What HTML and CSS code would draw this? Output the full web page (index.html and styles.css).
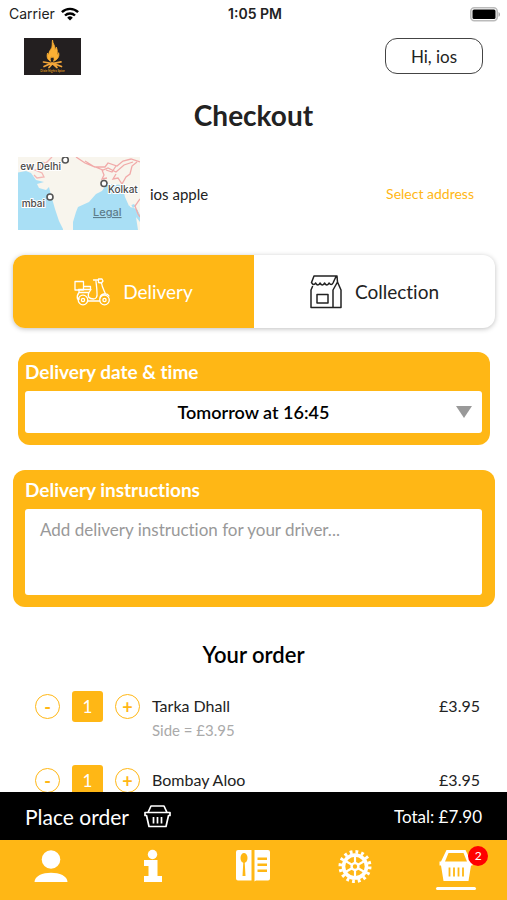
FILE: index.html
```html
<!DOCTYPE html>
<html lang="en">
<head>
<meta charset="utf-8">
<meta name="viewport" content="width=device-width, initial-scale=1">
<title>Checkout</title>
<link rel="stylesheet" href="styles.css">
</head>
<body>
<div class="status">
  <div class="carrier">Carrier
    <svg width="18" height="14" viewBox="0 0 18 14" fill="none" stroke="#000" stroke-width="2.4" aria-hidden="true"><path d="M.9 5.2a11.5 11.5 0 0 1 16.2 0M4 8.5a7.2 7.2 0 0 1 10 0"/><path d="M9 13.4 6.2 10.7a4 4 0 0 1 5.6 0z" fill="#000" stroke="none"/></svg>
  </div>
  <div class="clock">1:05 PM</div>
  <svg class="battery" width="31" height="15" viewBox="0 0 31 15" aria-hidden="true"><rect x=".8" y=".8" width="26.400" height="13" rx="3.500" fill="#fff" stroke="#bbb" stroke-width="1.600"/><rect x="2.500" y="2.500" width="23" height="9.600" rx="1.500"/><path d="M28.500 5c2 .8 2 4 0 4.800z" fill="#aaa"/></svg>
</div>

<main class="content">
  <header class="top">
    <svg class="logo" width="57" height="37" viewBox="0 0 57 37" role="img" aria-label="Restaurant logo">
      <rect width="57" height="37" fill="#231f20"/>
      <path d="M28.500 2c.2 4 3 5.500 2.300 9.500 1-.6 1.400-1.600 1.500-2.500 1.600 4 .8 5.500 1 7.500 1 0 1.300-1 1.300-1.800 1.300 4-1.600 7.300-5.100 8.600 1.300-2.300.4-3.600-.5-4.500-.8 1.300-1.700 1.300-1.800-.2-1.500 2-1.100 3.400-.3 4.700-3.500-1.200-4.500-4.800-3.300-8.300.3 1 .8 1.400 1.300 1.400-.3-4 3.600-5.400 3.300-9.400-.1-2 .1-3.500.3-5z" fill="#fbb034" stroke="#fbb034" stroke-width=".8"/>
      <path d="m19.500 24 9 1.500 8.500-1.700M20 28.500l8-3.500 9.500 3.500M25 29.500l3.500-4 4.500 4" fill="none" stroke="#f4a63a" stroke-width="1.700" stroke-linecap="round"/>
      <text x="28.500" y="34" text-anchor="middle" class="logo-text">Dixie Nights Spice</text>
    </svg>
    <button class="greeting" type="button">Hi, ios</button>
  </header>

  <h1>Checkout</h1>

  <section class="address">
    <svg class="map" width="122" height="73" viewBox="0 0 122 73" role="img" aria-label="Map of India">
      <rect width="122" height="73" fill="#f8f5ed"/>
      <path d="M0 15.500 8 14l5 2 5 7 8 2-7 2 2 4 7 2 3-3 2 8 4 14 4 12 4 8v5H0z" fill="#a9dff5"/>
      <path d="M55 73v-8l3-10 2-5 11-5 7-8 6-3 4-6 4-1 12 1 3 12 4 9 5-2 3 4 3 7v15z" fill="#a9dff5"/>
      <path d="m111 44 4 7 4-3 3 3v6l-3-5-7-2zM118 60l4 5v8h-2z" fill="#f8f5ed"/>
      <path d="M34 0 28 6l-5-1-1 6-5 2 7 3 2 4-7 1-3-3" fill="none" stroke="#f4b7b5" stroke-width="1.300"/>
      <path d="m58 0 9 6 10 4h10l3-4 9 3 6-5 8-2 9 3M67 4l8 5 10 4 5-2 8 4 8-7 9-3M84 13l2 5-2 4 5-1M98 17l-3 5 5-1 4 6 4-7 4-3 2-8 5-4M98 9l-4 6-6-2M122 42l-5 7 3 8 2 3" fill="none" stroke="#f1aaa9" stroke-width="1.300"/>
      <g fill="#fff" stroke="#555" stroke-width="1.600"><circle cx="47.300" cy="3" r="3"/><circle cx="86" cy="26.500" r="3"/><circle cx="32" cy="40" r="3"/></g>
      <g class="map-text"><text x="43" y="13" text-anchor="end">ew Delhi</text><text x="90" y="36">Kolkat</text><text x="27" y="50" text-anchor="end">mbai</text></g>
      <text x="75" y="59" class="map-legal">Legal</text>
    </svg>
    <span class="address-name">ios apple</span>
    <a class="select-address" href="#address">Select address</a>
  </section>

  <div class="tabs">
    <button class="tab tab-active" type="button" aria-pressed="true">
      <svg width="36" height="28" viewBox="0 0 36 28" fill="none" stroke="currentColor" stroke-width="1.300" stroke-linejoin="round" stroke-linecap="round" aria-hidden="true"><path d="M1 3.500h8.500v8.500H1zM9.500 8.500h7v3H4.500M5 12v2.500h10l2-3M5 14.500c-1.500 2-2.300 4-1.500 6.500h1.800M15 14.500c-2 4 0 6.500 4.500 6.500 2.500 0 4-2 3.500-6 0-4-.5-7-1-11.500M19.500 2h5M24.500 1h3.500l1 2-1.500 2-3-.5zM27.500 5c.5 4 2.300 7 4 11M26 20c.5-4.500 7-5.500 9-2"/><circle cx="9" cy="22" r="4.800"/><circle cx="9" cy="22" r="1.600"/><circle cx="30.500" cy="22" r="4.800"/><circle cx="30.500" cy="22" r="1.600"/><path d="M13.800 23h12"/></svg>
      Delivery
    </button>
    <button class="tab" type="button" aria-pressed="false">
      <svg width="32" height="34" viewBox="0 0 32 34" fill="none" stroke="currentColor" stroke-width="1.500" stroke-linejoin="round" stroke-linecap="round" aria-hidden="true"><path d="M4 1h23M4 1 1.500 7.500c1.500 2.500 3 2.500 4 .5 1.500 2.500 3.500 2.500 4.500 0 1.500 2.500 3.500 2.500 4.500 0 1.500 2.500 3.500 2.500 4.500 0 1.500 2 3 2 4 0L26 1.500M4 1h23l.5 6 3.500 8v17.500H1V15l1.500-3.500M27.500 7 23 15v17.500"/><path d="M7 19.500h11v8.500H7z"/></svg>
      Collection
    </button>
  </div>

  <section class="panel panel-time">
    <label for="time">Delivery date &amp; time</label>
    <div class="select-wrap">
      <select id="time"><option>Tomorrow at 16:45</option></select>
      <svg class="arrow" width="16" height="12" viewBox="0 0 16 12" aria-hidden="true"><path d="M0 0h16L8 12z" fill="#999"/></svg>
    </div>
  </section>

  <section class="panel panel-notes">
    <label for="notes">Delivery instructions</label>
    <textarea id="notes" placeholder="Add delivery instruction for your driver..."></textarea>
  </section>

  <h2>Your order</h2>
  <ul class="items">
    <li class="item">
      <div class="stepper"><button class="step" type="button" aria-label="Remove one Tarka Dhall">-</button><span class="qty">1</span><button class="step" type="button" aria-label="Add one Tarka Dhall">+</button></div>
      <div class="item-text"><div class="item-name">Tarka Dhall</div><div class="item-note">Side = £3.95</div></div>
      <div class="price">£3.95</div>
    </li>
    <li class="item">
      <div class="stepper"><button class="step" type="button" aria-label="Remove one Bombay Aloo">-</button><span class="qty">1</span><button class="step" type="button" aria-label="Add one Bombay Aloo">+</button></div>
      <div class="item-text"><div class="item-name">Bombay Aloo</div></div>
      <div class="price">£3.95</div>
    </li>
  </ul>
</main>

<div class="order-bar">
  <button class="place" type="button">Place order
    <svg width="27" height="23" viewBox="0 0 27 23" fill="none" stroke="#fff" stroke-width="1.700" stroke-linejoin="round" aria-hidden="true"><path d="M1 7.500h25v3h-1.500L22 21.500H5L2.500 10.500H1zM4 7.500 7 1h13l3 6.500M9.500 12v6.500M13.500 12v6.500M17.500 12v6.500"/></svg>
  </button>
  <div class="total">Total: £7.90</div>
</div>

<nav class="nav">
  <a href="#account" aria-label="Account"><svg width="34" height="34" viewBox="0 0 34 34" fill="#fff"><circle cx="17" cy="10.500" r="9.300"/><path d="M.5 33c0-12.500 33-12.500 33 0z"/></svg></a>
  <a href="#info" aria-label="Information"><svg width="34" height="34" viewBox="0 0 34 34" fill="#fff"><circle cx="17.500" cy="5.500" r="4.700"/><path d="M9 11h13.500v16H27v6H9v-6h4.500V17H9z"/></svg></a>
  <a href="#menu" aria-label="Menu"><svg width="34" height="34" viewBox="0 0 34 34" fill="#fff"><path d="M2 1h13.500v30.500H2a2 2 0 0 1-2-2V3a2 2 0 0 1 2-2zM18.500 1H32a2 2 0 0 1 2 2v26.500a2 2 0 0 1-2 2H20l-1.500 1z"/><g fill="#ffb715"><ellipse cx="8" cy="9" rx="3.500" ry="5"/><path d="M7.300 13h1.400l.8 14h-3zM21.500 8.500H31v2.500h-9.500zM21.500 14.500H31V17h-9.500zM21.500 20.500H31V23h-9.500z"/></g></svg></a>
  <a href="#settings" aria-label="Settings"><svg width="34" height="34" viewBox="0 0 34 34" fill="none" stroke="#fff"><circle cx="17" cy="17.500" r="11.500" stroke-width="3.600"/><circle cx="17" cy="17.500" r="14.700" stroke-width="3.600" stroke-dasharray="2.800 2.973"/><circle cx="17" cy="17.500" r="3.400" stroke-width="2.400"/><path stroke-width="2.200" d="M17 5.500v9M17 20.500v9M6.600 11.500l7.800 4.500M19.600 19l7.800 4.500M6.600 23.500l7.800-4.500M19.600 16l7.800-4.500"/></svg></a>
  <a class="basket" href="#basket" aria-label="Basket, 2 items"><svg width="34" height="34" viewBox="0 0 34 34" fill="#fff"><path d="M2 12.500 7.500 1h19L32 12.500h1.500v4H32l-2.500 15.500h-25L2 16.500H.5v-4zM6 12.500h22L24.500 4h-15z" fill-rule="evenodd"/><path d="M10.500 18.500v9M15 18.500v9M19.500 18.500v9M24 18.500v9" stroke="#ffb715" stroke-width="1.800"/></svg><span class="badge">2</span></a>
</nav>
</body>
</html>
```
FILE: styles.css
```css
* { box-sizing: border-box; }

body {
  margin: 0;
  height: 100vh;
  display: flex;
  flex-direction: column;
  background: #fff;
  color: #222;
  font-family: Lato, "Liberation Sans", sans-serif;
  font-size: 16px;
  font-variant-ligatures: none;
}

button, select, textarea { font: inherit; color: inherit; font-variant-ligatures: none; }
button { border: 0; padding: 0; background: none; cursor: pointer; }
svg { display: block; flex: none; }

.status {
  display: grid;
  grid-template-columns: 1fr auto 1fr;
  align-items: center;
  height: 28px;
  padding: 0 6px 0 9px;
  flex: none;
  font: 14px/20px Inter, "Liberation Sans", sans-serif;
}
.carrier { display: flex; align-items: center; gap: 6px; }
.clock { font-weight: 600; }
.battery { justify-self: end; }

.content {
  flex: 1;
  min-height: 0;
  overflow-y: auto;
  scrollbar-width: none;
}

.top {
  display: flex;
  justify-content: space-between;
  padding: 10px 24px 0;
}
.logo-text { font-size: 3px; font-weight: 700; fill: #d9921f; }
.greeting {
  width: 98px;
  height: 36px;
  border: 1px solid #444;
  border-radius: 12px;
  font-size: 17px;
}

h1 {
  margin: 19px 0 0;
  font-size: 28px;
  line-height: 42px;
  font-weight: 700;
  text-align: center;
}

.address {
  display: flex;
  align-items: center;
  gap: 10px;
  margin: 21px 33px 0 18px;
}
.address-name { flex: 1; font-size: 15px; }
.select-address { font-size: 14px; color: #ffb715; text-decoration: none; }
.map-text { font: 500 10px Inter, sans-serif; fill: #4a4a4a; stroke: #fff; stroke-width: 2px; paint-order: stroke; }
.map-legal { font: 500 11px Inter, sans-serif; fill: #5d7d8c; text-decoration: underline; }

.tabs {
  display: flex;
  margin: 25px 12px 0 13px;
  height: 73px;
  border-radius: 12px;
  overflow: hidden;
  box-shadow: 0 1px 5px rgba(0, 0, 0, .25);
}
.tab {
  flex: 1;
  display: flex;
  align-items: center;
  justify-content: center;
  gap: 13px;
  font-size: 19px;
}
.tab-active { background: #ffb715; color: #fff; }

.panel {
  background: #ffb715;
  border-radius: 12px;
  padding-bottom: 12px;
}
.panel label {
  display: block;
  color: #fff;
  font-size: 19px;
  line-height: 39px;
  font-weight: 700;
}
.panel-time { margin: 24px 17px 0 18px; padding-left: 7px; padding-right: 8px; }
.panel-notes { margin: 25px 12px 0 13px; padding-left: 12px; padding-right: 13px; }
.select-wrap { position: relative; }
select, textarea {
  display: block;
  width: 100%;
  border: 0;
  border-radius: 3px;
  background: #fff;
}
select {
  appearance: none;
  height: 42px;
  color: #000;
  font-size: 18px;
  font-weight: 600;
  text-align: center;
  text-align-last: center;
}
.arrow { position: absolute; right: 10px; top: 15px; pointer-events: none; }
textarea {
  height: 86px;
  padding: 10px 15px;
  font-size: 17px;
  line-height: 22px;
  resize: none;
}
textarea::placeholder { color: #999; opacity: 1; }

h2 {
  margin: 34px 0 0;
  color: #000;
  font-size: 22px;
  line-height: 28px;
  font-weight: 600;
  text-align: center;
}
.items { list-style: none; margin: 22px 0 0; padding: 0 27px 0 35px; }
.item { display: flex; gap: 12px; height: 74px; }
.stepper { display: flex; align-items: center; gap: 12px; height: 31px; }
.step {
  width: 25px;
  height: 25px;
  border: 1px solid #ffb715;
  border-radius: 50%;
  color: #ffb715;
  font-size: 18px;
  line-height: 20px;
  font-weight: 700;
}
.qty {
  width: 31px;
  border-radius: 3px;
  background: #ffb715;
  color: #fff;
  font-size: 17px;
  line-height: 31px;
  text-align: center;
}
.item-text { flex: 1; }
.item-name, .price { font-size: 16px; line-height: 30px; }
.item-note { color: #aaa; font-size: 15px; line-height: 18px; }

.order-bar {
  flex: none;
  display: flex;
  align-items: center;
  justify-content: space-between;
  height: 48px;
  padding: 0 25px;
  background: #000;
  color: #fff;
}
.place { display: flex; align-items: center; gap: 15px; font-size: 21px; }
.total { font-size: 17px; }

.nav {
  flex: none;
  display: grid;
  grid-template-columns: repeat(5, 1fr);
  height: 60px;
  background: #ffb715;
}
.nav a { position: relative; justify-self: center; padding: 9px 3px 0; }
.basket::after {
  content: "";
  display: block;
  height: 3px;
  margin: 4px -3px 0;
  border-radius: 2px;
  background: #fff;
}
.badge {
  position: absolute;
  top: 6px;
  right: -12px;
  width: 20px;
  border-radius: 50%;
  background: #f00;
  color: #fff;
  font-size: 12px;
  line-height: 20px;
  text-align: center;
}
```
